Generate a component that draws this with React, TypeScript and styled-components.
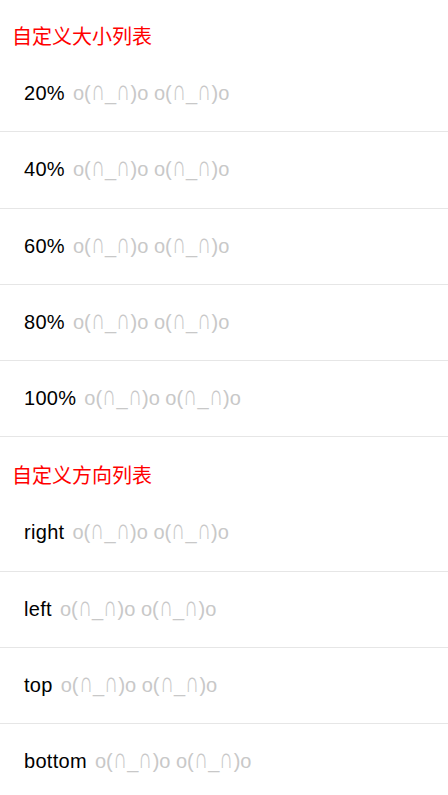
import React from "react";
import styled, { createGlobalStyle } from "styled-components";

const Global = createGlobalStyle`
  html, body { margin: 0; padding: 0; background: #fff; }
  body { font-family: "Liberation Sans", "Noto Sans CJK SC", sans-serif; }
`;

const Page = styled.div`
  display: flex;
  flex-direction: column;
  width: 448px;
`;

const Section = styled.section<{ $first?: boolean }>`
  display: flex;
  flex-direction: column;
  padding-top: ${(p) => (p.$first ? 0 : 2)}px;
`;

const Title = styled.h2`
  margin: 0;
  padding: 24px 12px 8px;
  font-size: 20px;
  line-height: 24px;
  font-weight: normal;
  color: #ff0000;
  font-family: "Noto Sans CJK SC", sans-serif;
`;

const Row = styled.div`
  display: flex;
  align-items: center;
  height: 75.25px;
  padding: 0 24px;
  border-bottom: 1px solid #e6e6e6;
  font-size: 20px;
  color: #000;
`;

const Label = styled.span`
  letter-spacing: 0.3px;
`;

const Face = styled.span`
  margin-left: 8px;
  color: #c8c8c8;
`;

const Cap = styled.span`
  display: inline-block;
  transform: scale(0.95, 1.45);
  transform-origin: 50% 78%;
`;

const FaceText = () => (
  <>
    o(<Cap>∩</Cap>_<Cap>∩</Cap>)o o(<Cap>∩</Cap>_<Cap>∩</Cap>)o
  </>
);

const sizes = ["20%", "40%", "60%", "80%", "100%"];
const dirs = ["right", "left", "top", "bottom"];

export default function App() {
  return (
    <Page>
      <Global />
      <Section $first>
        <Title>自定义大小列表</Title>
        {sizes.map((s) => (
          <Row key={s}>
            <Label>{s}</Label>
            <Face>
              <FaceText />
            </Face>
          </Row>
        ))}
      </Section>
      <Section>
        <Title>自定义方向列表</Title>
        {dirs.map((d) => (
          <Row key={d}>
            <Label>{d}</Label>
            <Face>
              <FaceText />
            </Face>
          </Row>
        ))}
      </Section>
    </Page>
  );
}
